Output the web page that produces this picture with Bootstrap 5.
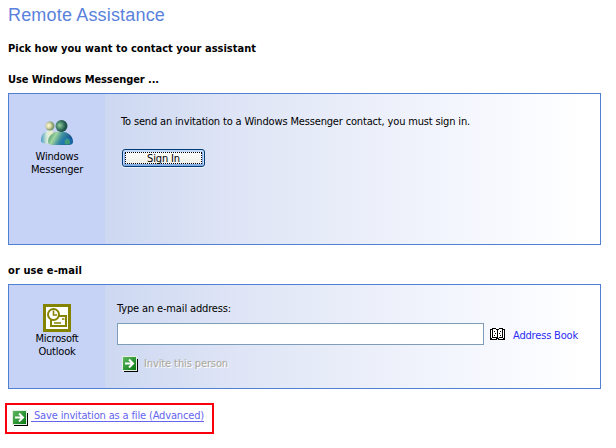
<!DOCTYPE html>
<html lang="en">
<head>
<meta charset="utf-8">
<title>Remote Assistance</title>
<link href="https://cdn.jsdelivr.net/npm/bootstrap@5.3.0/dist/css/bootstrap.min.css" rel="stylesheet">
<style>
body{font:11px/13px Tahoma,"DejaVu Sans Condensed","DejaVu Sans",sans-serif;color:#000;width:616px;height:448px;overflow:hidden;padding:5px 0 0 8px}
.title{font:18px/20px "Liberation Sans",sans-serif;color:#5a82dc;margin:0 0 17px}
.sub{font-size:11px;line-height:13px;font-weight:700;margin:0}
.sub-messenger{margin-top:18px}
.sub-email{margin-top:19px}
[data-w]{white-space:pre}
.t{display:inline-block}
.panel{width:593px;border:1px solid #5080d4}
.fade-bg{background:linear-gradient(90deg,#cdd8f1,#dfe5f6 134px,#eff2fb 300px,#f8faff 410px,#fff 480px)}
.side{width:96px;background:#c6d2f6}
.p1{height:152px;margin-top:7px}
.p2{height:105px;margin-top:7px}
.p1 .side{padding-top:26px}
.p2 .side{padding-top:19px}
.p1 .fade-bg{padding:21px 0 0 16px}
.p2 .fade-bg{padding:17px 0 0 12px}
.signin{width:83px;height:18px;margin:21px 0 0 1px;border:1px solid #003c74;border-radius:3px;background:linear-gradient(#fff,#eeeee6);box-shadow:inset 0 1px 0 1px #c4dafb,inset 0 0 0 2px #88aee8,0 1px 0 #eef2fb;padding:2px;font:inherit;line-height:11px;color:#000}
.signin .focus{display:block;border:1px dotted #000;height:12px;line-height:11px}
.entry{margin-top:8px}
.email{width:367px;height:22px;border:1px solid #7f9db9;border-radius:0;padding:0 4px;font:inherit;background:#fff}
.book-icon{margin:5px 0 0 6px}
.book{color:#2c2cf4;text-decoration:none;margin:6px 0 0 8px}
.invite{margin:11px 0 0 5px}
.off{color:#aca899;text-shadow:1px 1px #fff;margin-left:5px;margin-top:1px}
.save{color:#6464f0;text-decoration:underline;text-underline-offset:2px;margin:-1px 0 0 2px}
.redbox{width:209px;height:31px;border:2px solid #fa000c;margin:14px 0 0 -3px;padding:5px 0 0 5px}
svg{display:block;flex:none}
</style>
<script src="https://cdn.jsdelivr.net/npm/bootstrap@5.3.0/dist/js/bootstrap.bundle.min.js"></script>
</head>
<body>
<svg width="0" height="0" class="position-absolute"><defs>
<linearGradient id="gg" x2="1" y2="1"><stop stop-color="#5eb862"/><stop offset="1" stop-color="#087b12"/></linearGradient>
<linearGradient id="b1" x2="1"><stop stop-color="#4c9cc4"/><stop offset=".35" stop-color="#d9ecd8"/><stop offset=".65" stop-color="#eef0c8"/><stop offset="1" stop-color="#488aa8"/></linearGradient>
<linearGradient id="b2" x2="1" y2=".3"><stop stop-color="#2f7f70"/><stop offset=".35" stop-color="#a0d69c"/><stop offset=".6" stop-color="#3f8fa0"/><stop offset="1" stop-color="#12508c"/></linearGradient>
<radialGradient id="h1" cx=".35" cy=".45"><stop stop-color="#fffbe0"/><stop offset=".6" stop-color="#d3d39c"/><stop offset="1" stop-color="#7f9a6c"/></radialGradient>
<radialGradient id="h2" cx=".35" cy=".45"><stop stop-color="#91ce99"/><stop offset=".6" stop-color="#47846b"/><stop offset="1" stop-color="#1d5448"/></radialGradient>
<g id="go"><path d="M2 16h14V3h-1v12H2z" fill="#000"/><path d="M0 0h15v15H0z" fill="#e4f0e2"/><path d="M1 1h13v13H1z" fill="url(#gg)"/><path d="M3 7.500h8M7 3.500l4 4-4 4" fill="none" stroke="#fff" stroke-width="2"/></g>
</defs></svg>
<h1 class="title"><span class="t" data-w="157">Remote Assistance</span></h1>
<h2 class="sub"><span data-w="248">Pick how you want to contact your assistant</span></h2>
<h2 class="sub sub-messenger"><span data-w="151">Use Windows Messenger ...</span></h2>
<section class="panel p1 d-flex">
 <div class="side d-flex flex-column align-items-center text-center">
  <svg width="32" height="26" viewBox="0 0 32 26"><path d="M0 20.500C0 14 4 10.500 9 10.500s8 4 8 13H5C3 23.500 0 23 0 20.500z" fill="url(#b1)"/><circle cx="9" cy="6" r="4.500" fill="url(#h1)"/><path d="M7 22c0-6 5-10.500 12.500-10.500S32 16 32 22c0 2-2 3-5 3H12c-3 0-5-1-5-3z" fill="url(#b2)"/><path d="M18 24.500c2-6 6-9 12-6 3 3 2 6-2 6z" fill="#1f7cc0" opacity=".55"/><path d="M24 24.500c-1-3 0-5 2-6 3 1 4 4 2 6z" fill="#52b45c" opacity=".65"/><circle cx="20.500" cy="6" r="6" fill="url(#h2)"/></svg>
  <div class="mt-1"><span class="t" data-w="43">Windows</span><br><span class="t" data-w="52">Messenger</span></div>
 </div>
 <div class="fade-bg flex-grow-1">
  <div><span class="t" data-w="349">To send an invitation to a Windows Messenger contact, you must sign in.</span></div>
  <button class="signin d-block"><span class="focus"><span class="t" data-w="33">Sign In</span></span></button>
 </div>
</section>
<h2 class="sub sub-email"><span data-w="74">or use e-mail</span></h2>
<section class="panel p2 d-flex">
 <div class="side d-flex flex-column align-items-center text-center">
  <svg width="28" height="28" viewBox="0 0 28 28" fill="none" stroke="#848400"><path d="M1.500 1.500h25v25h-25z" fill="#fff" stroke-width="3"/><path d="M8 15v7h15V12h-7" stroke-width="2"/><circle cx="10.500" cy="10.500" r="5.500" fill="#fff" stroke-width="2"/><path d="M10.500 6.500v4.500h3.500M19 15h2.500M11 19h7" stroke-width="1.600"/></svg>
  <div class="pt-0"><span class="t" data-w="43">Microsoft</span><br><span class="t" data-w="37">Outlook</span></div>
 </div>
 <div class="fade-bg flex-grow-1">
  <div><span class="t" data-w="114">Type an e-mail address:</span></div>
  <div class="entry d-flex">
   <input class="email" type="text" aria-label="E-mail address">
   <svg class="book-icon" width="15" height="12" viewBox="0 0 15 12" shape-rendering="crispEdges"><path d="M0 1h2V0h4v1h3V0h4v1h2v11H8v-1H7v1H0z" fill="#000"/><path d="M1 2h1v8H1zM3 1h3v1h1v7H6V9H3zM8 2h1V1h3v8H9v1H8zM13 2h1v8h-1zM2 10h4v1H2zM9 10h4v1H9z" fill="#fff"/><path d="M4 3h1v1H4zM5 5h1v1H5zM4 7h1v1H4zM10 3h1v1h-1zM9 5h1v1H9zM10 7h1v1h-1z" fill="#000"/></svg>
   <a class="book" href="#"><span class="t" data-w="65">Address Book</span></a>
  </div>
  <div class="invite d-flex"><svg width="17" height="17"><use href="#go"/></svg><span class="t off" data-w="84">Invite this person</span></div>
 </div>
</section>
<div class="redbox d-flex"><svg width="17" height="17"><use href="#go"/></svg><a class="save" href="#"><span data-w="173"> Save invitation as a file (Advanced)</span></a></div>
<script>
/* Tune tracking so each label fills its nominal width. */
document.querySelectorAll('[data-w]').forEach(function(e){
  var w=e.getBoundingClientRect().width,n=e.textContent.length;
  e.style.letterSpacing=((e.dataset.w-w)/n)+'px';
});
</script>
</body>
</html>
